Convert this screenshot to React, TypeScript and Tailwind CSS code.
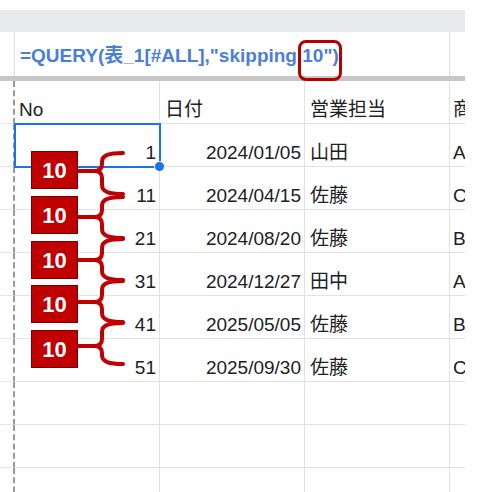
import React from "react";

const rows = [
  { no: "1", date: "2024/01/05", rep: "山田", item: "A" },
  { no: "11", date: "2024/04/15", rep: "佐藤", item: "C" },
  { no: "21", date: "2024/08/20", rep: "佐藤", item: "B" },
  { no: "31", date: "2024/12/27", rep: "田中", item: "A" },
  { no: "41", date: "2025/05/05", rep: "佐藤", item: "B" },
  { no: "51", date: "2025/09/30", rep: "佐藤", item: "C" },
];

// label box tops and brace geometry (top arm, bottom arm, cusp)
const labels = [151, 196, 241, 285, 330];
const braces = [
  { top: 153, bot: 194, mid: 171 },
  { top: 197, bot: 238, mid: 217 },
  { top: 239, bot: 280, mid: 260 },
  { top: 281, bot: 322, mid: 302 },
  { top: 323, bot: 364, mid: 346 },
];

function bracePath(b: { top: number; bot: number; mid: number }) {
  const x = 102;
  return [
    `M123 ${b.top} C109 ${b.top} ${x} ${b.top + 2} ${x} ${b.top + 9}`,
    `L${x} ${b.mid - 7} C${x} ${b.mid - 2} ${x - 3} ${b.mid} ${x - 8} ${b.mid}`,
    `L78 ${b.mid}`,
    `M${x - 8} ${b.mid} C${x - 3} ${b.mid} ${x} ${b.mid + 2} ${x} ${b.mid + 7}`,
    `L${x} ${b.bot - 9} C${x} ${b.bot - 2} 109 ${b.bot} 123 ${b.bot}`,
  ].join(" ");
}

const cell = "flex items-end border-b border-r border-[#e2e2e2] pb-[2px] leading-[22px]";

function Row({ cells, header }: { cells: string[]; header?: boolean }) {
  return (
    <div className="grid h-[43px] grid-cols-[15px_145px_145px_145px_145px]">
      <div className="border-b border-r-2 border-dashed border-b-[#e2e2e2] border-r-[#9a9a9a]" />
      <div className={`${cell} ${header ? "pl-[4px]" : "justify-end pr-[3px]"}`}>{cells[0]}</div>
      <div className={`${cell} ${header ? "pl-[5px]" : "justify-end pr-[3px]"}`}>{cells[1]}</div>
      <div className={`${cell} pl-[5px]`}>{cells[2]}</div>
      <div className={`${cell} pl-[3px]`}>{cells[3]}</div>
    </div>
  );
}

export default function App() {
  return (
    <div className="relative h-[492px] w-[477px] overflow-hidden bg-white font-['Liberation_Sans','Noto_Sans_CJK_JP',sans-serif] text-[19px] text-[#202124]">
      <div className="h-[10px]" />
      <div className="h-[22px] w-[465px] bg-[#e8eaed]" />

      <div className="relative flex h-[44px] w-[465px]">
        <div className="w-[15px] border-r border-[#e2e2e2]" />
        <div className="flex w-[435px] items-center border-r border-[#e2e2e2] pl-[5px] pt-[4px] font-bold text-[#4a7fd8]">
          =QUERY(表_1[#ALL],"skipping 10")
        </div>
        <div className="absolute left-[298px] top-[8px] h-[41px] w-[44px] rounded-[8px] border-[3px] border-[#b30000]" />
      </div>
      <div className="h-[5px] w-[465px] bg-[#c6c6c6]" />

      <div className="w-[465px] overflow-hidden">
        <Row header cells={["No", "日付", "営業担当", "商"]} />
        {rows.map((r) => (
          <Row key={r.no} cells={[r.no, r.date, r.rep, r.item]} />
        ))}
        <Row cells={["", "", "", ""]} />
        <Row cells={["", "", "", ""]} />
        <Row cells={["", "", "", ""]} />
      </div>

      {/* active cell */}
      <div className="absolute left-[14px] top-[123px] h-[45px] w-[147px] border-2 border-[#1a73e8]" />
      <div className="absolute left-[154px] top-[161px] h-[11px] w-[11px] rounded-full border border-white bg-[#1a73e8]" />

      <svg className="pointer-events-none absolute left-0 top-0" width="477" height="492">
        {braces.map((b, i) => (
          <path key={i} d={bracePath(b)} fill="none" stroke="#c00000" strokeWidth="4" strokeLinecap="round" strokeLinejoin="round" />
        ))}
      </svg>

      {labels.map((t) => (
        <div
          key={t}
          className="absolute left-[31px] flex h-[38px] w-[47px] items-center justify-center border border-[#7a0000] bg-[#c00000] text-[22px] font-bold text-white"
          style={{ top: t }}
        >
          10
        </div>
      ))}
    </div>
  );
}
